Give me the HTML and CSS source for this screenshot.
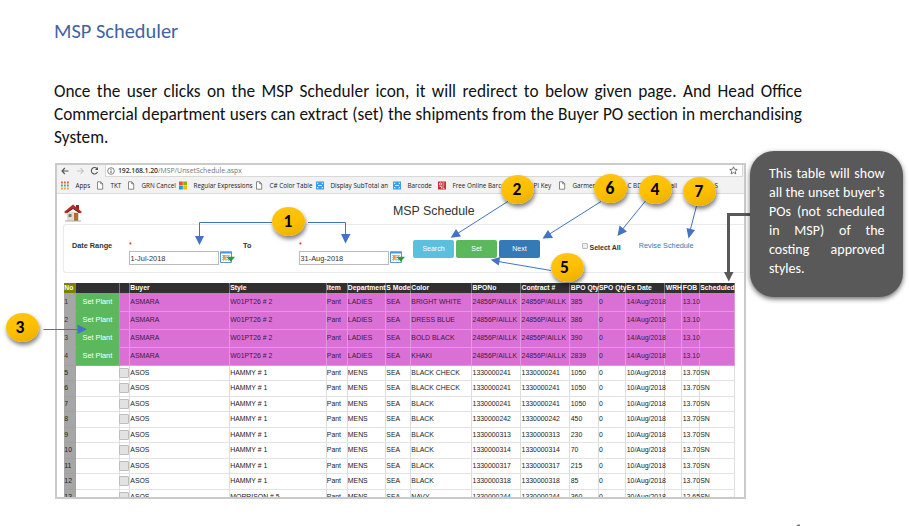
FILE: index.html
```html
<!DOCTYPE html>
<html lang="en">
<head>
<meta charset="utf-8">
<title>MSP Scheduler</title>
<link rel="stylesheet" href="styles.css">
</head>
<body>
<svg class="defs" width="0" height="0" aria-hidden="true">
  <symbol id="doc" viewBox="0 0 8 9"><path d="M1.5 .8h3.2l2 2v5.4H1.500zM4.700 .8v2h2" fill="#fff" stroke="#6b6b6b" stroke-width=".8"/></symbol>
  <symbol id="blue" viewBox="0 0 8 9"><path d="M0 .5h8v8H0z" fill="#3f9be6"/><path d="M1.500 3V2h1M5.500 2h1v1M1.500 6v1h1M5.500 7h1V6M2 4.500h4" fill="none" stroke="#fff" stroke-width=".8"/></symbol>
  <symbol id="cal" viewBox="0 0 15 13"><path d="M.5 1h11v10.500H.5z" fill="#fff" stroke="#5b95d6"/><path d="M0 .5h12v2H0z" fill="#4d93dd"/><path d="M2 4.500h8M2 6.500h8M2 8.500h8M3.500 4v6M6 4v6M8.500 4v6" stroke="#9fb4c6" stroke-width=".8"/><path d="M3 4h2.500v4H3z" fill="#e0a33c"/><path d="M6.500 5.800H15l-4.200 5z" fill="#2e9a3f"/></symbol>
</svg>
<main class="document">
  <h1>MSP Scheduler</h1>
  <div class="intro">
    <p>Once the user clicks on the MSP Scheduler icon, it will redirect to below given page. And Head Office</p>
    <p class="tight">Commercial department users can extract (set) the shipments from the Buyer PO section in merchandising</p>
    <p class="last">System.</p>
  </div>

  <section class="browser">
    <div class="address">
      <svg class="nav" viewBox="0 0 48 12"><g fill="none" stroke="#555" stroke-width="1.100"><path d="M11.500 6H5M7.800 3L5 6l2.800 3"/><path d="M20 6h6M23.500 3.200L26.300 6l-2.800 2.800" stroke="#c4c4c4"/><path d="M40 3.700A3.200 3.200 0 1 0 40.500 7"/></g><path d="M38 5h3V2z" fill="#555"/></svg>
      <div class="url"><svg viewBox="0 0 8 8"><circle cx="4" cy="4" r="3.300" fill="none" stroke="#666" stroke-width=".8"/><path d="M4 3.600v2.400M4 1.900v.9" stroke="#555"/></svg><b>192.168.1.20</b><span>/MSP/UnsetSchedule.aspx</span>
      <svg class="star" viewBox="0 0 10 10"><path d="M5 .9l1.200 2.700 2.900.3-2.200 2 .7 2.900L5 7.300 2.400 8.800l.7-2.900-2.200-2 2.900-.3z" fill="none" stroke="#555" stroke-width=".9"/></svg></div>
    </div>
    <nav class="bookmarks">
      <span class="w35"><svg viewBox="0 0 8 9"><g stroke-width="1.800" stroke-dasharray="1.800 1.200"><path d="M0 1.500h8" stroke="#e25b4f"/><path d="M0 4.500h8" stroke="#58a55c"/><path d="M0 7.500h8" stroke="#e8a33c"/></g></svg>Apps</span>
      <span class="w31"><svg><use href="#doc"/></svg>TKT</span>
      <span class="w52"><svg><use href="#doc"/></svg>GRN Cancel</span>
      <span class="w76"><svg viewBox="0 0 8 9"><path d="M0 .5h3.800v3.800H0z" fill="#f25022"/><path d="M4.200 .5H8v3.800H4.200z" fill="#7fba00"/><path d="M0 4.700h3.800v3.800H0z" fill="#00a4ef"/><path d="M4.200 4.700H8v3.800H4.200z" fill="#ffb900"/></svg>Regular Expressions</span>
      <span class="w61"><svg><use href="#doc"/></svg>C# Color Table</span>
      <span class="w77"><svg><use href="#blue"/></svg>Display SubTotal an</span>
      <span class="w45"><svg><use href="#blue"/></svg>Barcode</span>
      <span class="w77"><svg viewBox="0 0 8 9"><path d="M0 .5h8v8H0z" fill="#c22f34"/><path d="M1.500 2h2v2h-2zM4.500 2h2M4.500 4h2M1.500 5.500h2v2M5 5v2.500h1.500" fill="none" stroke="#fff" stroke-width=".7"/></svg>Free Online Barco</span>
      <span class="w43"><svg></svg>API Key</span>
      <span class="w55"><svg><use href="#doc"/></svg>Garment</span>
      <span class="w43"><svg></svg>C BD</span>
      <span class="w43"><svg></svg>ail</span>
      <span class="end">S</span>
    </nav>
    <div class="page-head">
      <svg class="home" viewBox="0 0 18 18"><path d="M3 8h12v9H3z" fill="#e6dccb"/><path d="M10 9h4v8h-4z" fill="#b26e2d"/><path d="M4.500 10h3v3h-3z" fill="#657f98"/><path d="M12 1h3v5h-3z" fill="#8b281f"/><path d="M0 8L9 .5 18 8l-2 1.500-7-5-7 5z" fill="#b92b24"/><path d="M3 8l6-4 6 4v1l-6-4-6 4z" fill="#5c2020"/><path d="M1 17h16" stroke="#aaa"/></svg>
      <h2>MSP Schedule</h2>
    </div>
    <div class="filters">
      <b class="range">Date Range</b>
      <label class="date"><i>*</i><span>1-Jul-2018</span></label>
      <svg class="cal"><use href="#cal"/></svg>
      <b class="to">To</b>
      <label class="date"><i>*</i><span>31-Aug-2018</span></label>
      <svg class="cal"><use href="#cal"/></svg>
      <div class="buttons"><span class="btn search">Search</span><span class="btn set">Set</span><span class="btn next">Next</span></div>
      <div class="all"><span class="check"></span><b>Select All</b></div>
      <span class="revise">Revise Schedule</span>
    </div>
    <div class="orders" id="orders"></div>
  </section>
</main>

<svg class="arrows" viewBox="0 0 909 526">
  <g fill="none" stroke="#4472c4" stroke-width="1">
    <path d="M272 222.500H199.500V237M308 222.500H345.500V236M508.500 201L456 234.500M551 270.500L498 261.500M601 201.500L548 235M645.500 201L621 231M696.500 206L690 231M43.500 329.500H79"/>
  </g>
  <path fill="#4472c4" d="M195 236h9l-4.500 9zM341 234h9.500L345.500 243.500zM450.700 237.700L456 229l5 7.500zM490.700 259.700l9.500-2.700-1.500 8.500zM542.500 238.500l5.500-8.500 5 8zM617.500 236l2-10.500 7.500 6zM688.500 238.500L686.500 228l8.500 2zM77.500 324.500v9.500l9.500-4.700z"/>
  <path d="M750 214.500H728.500V273" fill="none" stroke="#595959" stroke-width="3"/>
  <path d="M724 272h9.500l-4.700 9.500z" fill="#595959"/>
  <path d="M796 526l2-1.500h2V526z" fill="#777"/>
</svg>
<div class="badge n1">1</div>
<div class="badge n2">2</div>
<div class="badge n3">3</div>
<div class="badge n4">4</div>
<div class="badge n5">5</div>
<div class="badge n6">6</div>
<div class="badge n7">7</div>
<aside class="note">
  <p>This table will show</p><p class="tight">all the unset buyer’s</p><p>POs (not scheduled</p><p>in MSP) of the</p><p>costing approved</p><p class="last">styles.</p>
</aside>
<script src="orders.js"></script>
</body>
</html>
```
FILE: styles.css
```css
* { box-sizing: border-box; }
body { margin: 0; width: 909px; height: 526px; overflow: hidden; background: #fff; position: relative; font-family: "Liberation Sans", sans-serif; }
.defs { position: absolute; }
h1, h2, p { margin: 0; font-weight: normal; }
.document { padding: 19px 0 0 55px; }
h1 { font: 20.400px/24px Carlito, Lato, sans-serif; color: #3f63a3; white-space: nowrap; margin-left: -1px; }
.intro { width: 748px; margin: 37px 0 0 -1px; font: 17.3px/23px Carlito, Lato, sans-serif; color: #111; height: 83px; }
.intro p, .note p { text-align: justify; text-align-last: justify; white-space: nowrap; }
.intro .tight { word-spacing: -1.5px; letter-spacing: -.02px; }
.intro .last, .note .last { text-align-last: left; }

.browser { width: 691px; height: 336px; border: 2px solid #cacaca; overflow: hidden; }
.address { height: 12px; background: #f2f2f2; display: flex; }
.nav { width: 48px; height: 12px; flex: none; }
.url { flex: 1; background: #fff; border: 1px solid #d8d8d8; border-top: 0; margin-right: 1px; display: flex; align-items: center; font: 6.900px/11px "Open Sans", sans-serif; color: #777; }
.url svg { width: 8px; height: 8px; margin: 0 3px 0 1px; }
.url b { font-weight: 600; color: #333; letter-spacing: -.1px; }
.url .star { width: 9px; height: 9px; margin: 0 4px 0 auto; }
.bookmarks { height: 17px; background: #f2f2f2; border-bottom: 1px solid #ddd; display: flex; padding-left: 4px; align-items: center; font: 6.300px/9px "Open Sans", sans-serif; color: #222; white-space: nowrap; }
.bookmarks span { flex: none; display: flex; align-items: center; }
.bookmarks svg { width: 8px; height: 9px; margin-right: 6.500px; flex: none; }
.bookmarks .end { margin-left: 15.500px; }
.w31 { width: 31px; } .w35 { width: 35px; } .w43 { width: 43px; } .w45 { width: 45px; } .w52 { width: 52px; }
.w55 { width: 55px; } .w61 { width: 61px; } .w76 { width: 76px; } .w77 { width: 77px; }

.page-head { height: 30px; display: flex; padding: 10px 0 0 7px; }
.home { width: 18px; height: 18px; }
h2 { font-size: 12.400px; line-height: 14px; color: #333; margin-left: 311px; }
.filters { height: 49px; margin-left: 6px; border: 1px solid #eaeaea; border-right: 0; border-radius: 3px 0 0 3px; display: flex; align-items: flex-start; font-size: 7.300px; line-height: 9px; color: #333; white-space: nowrap; }
.range { width: 57px; margin: 16px 0 0 8px; }
.date { width: 90px; margin-top: 15px; }
.date i { display: block; color: red; font-style: normal; height: 11px; }
.date span { display: block; height: 14px; border: 1px solid #bbb; padding: 2px .5px; font-size: 7.400px; color: #333; }
.cal { width: 15px; height: 13px; margin: 26px 0 0 1px; }
.to { width: 56px; margin: 16px 0 0 8px; }
.buttons { display: flex; gap: 2px; margin: 15px 0 0 8px; }
.btn { width: 41px; height: 18px; border-radius: 2px; color: #fff; text-align: center; line-height: 18px; font-size: 7px; }
.search { background: #5bc0de; } .set { background: #5cb85c; } .next { background: #337ab7; }
.all { display: flex; margin: 17px 0 0 42px; font-size: 7px; line-height: 11px; }
.check { width: 6px; height: 6px; border: 1px solid #bbb; background: #eee; border-radius: 1px; margin: 1px 1.500px 0 0; }
.revise { color: #337ab7; margin: 16px 0 0 18px; }

.orders { margin: 10px 0 0 7px; width: 671px; font-size: 6.900px; color: #222; }
.row { display: grid; grid-template-columns: 12px 43.500px 10.500px 100px 96.500px 21px 38.500px 25px 61.300px 49px 49.200px 28.200px 27.800px 39px 17px 17.500px 35px; height: 15.550px; line-height: 14px; white-space: nowrap; }
.row > span { border-right: 1px solid #ddd; border-bottom: 1px solid #e3e3e3; padding-left: .3px; }
.row > span:first-child { background: #a6a6a6; border-color: #a0a0a0; }
.row.head { height: 9.500px; line-height: 9.500px; background: #303030; color: #fff; font-weight: bold; font-size: 6.800px; }
.row.head > span { border-bottom: 0; border-color: #777; }
.row.head > span:first-child { background: #808000; }
.row.pink { height: 18.250px; line-height: 18px; background: #da70d6; color: #3b1c3a; }
.row.pink > span { border-color: #dd9bdc; }
.row.pink > span:first-child { border-color: #a0a0a0; color: #333; }
.row.pink > .plant { background: #5cb85c; color: #fff; text-align: center; font-size: 7.300px; border-color: #82bb80; border-radius: 2px; }
.box { display: block; width: 10px; height: 10px; margin: 2px 0 0 -.5px; background: #e2e2e2; border: 1px solid #bdbdbd; border-radius: 1px; }

.arrows { position: absolute; left: 0; top: 0; width: 909px; height: 526px; }
.badge { position: absolute; width: 33px; height: 29px; padding-right: 1px; border-radius: 50%; background: linear-gradient(160deg, #ffc61a, #ffc000 50%, #e8ae00); box-shadow: 1px 3px 4px rgba(0,0,0,.5); font: bold 17.500px/29px Carlito, "Open Sans", sans-serif; text-align: center; color: #000; }
.n1 { left: 272px; top: 207px; } .n2 { left: 501px; top: 175px; } .n3 { left: 6px; top: 313px; padding-right: 5px; } .n4 { left: 639px; top: 175px; }
.n5 { left: 551px; top: 253px; padding-right: 6px; } .n6 { left: 594px; top: 174px; } .n7 { left: 683px; top: 177px; }
.note { position: absolute; left: 750px; top: 151px; width: 153px; height: 146px; padding: 13px 18.500px 0 19px; border-radius: 24px; background: #595959; box-shadow: 0 2px 5px rgba(0,0,0,.6); color: #fff; font: 14px/19px Carlito, Lato, sans-serif; }
.note .tight { word-spacing: -1.500px; }
```
FILE: orders.js
```js
const heads = ["No", "", "", "Buyer", "Style", "Item", "Department", "S Mode", "Color", "BPONo", "Contract #", "BPO Qty", "SPO Qty", "Ex Date", "WRH", "FOB", "Scheduled"];
const unset = [["BRIGHT WHITE", 385], ["DRESS BLUE", 386], ["BOLD BLACK", 390], ["KHAKI", 2839]];
const planned = [
  ["BLACK CHECK", "1330000241", 1050], ["BLACK CHECK", "1330000241", 1050], ["BLACK", "1330000241", 1050],
  ["BLACK", "1330000242", 450], ["BLACK", "1330000313", 230], ["BLACK", "1330000314", 70],
  ["BLACK", "1330000317", 215], ["BLACK", "1330000318", 85],
  ["NAVY", "1330000244", 360, "MORRISON # 5", "30/Aug/2018", "12.65"]
];
const table = document.getElementById("orders");
function addRow(kind, cells) {
  const row = document.createElement("div");
  row.className = "row " + kind;
  cells.forEach((value, i) => {
    const cell = document.createElement("span");
    cell.textContent = value;
    if (i === 1) cell.className = "plant";
    if (i === 2 && kind === "plain") cell.innerHTML = '<span class="box"></span>';
    row.append(cell);
  });
  table.append(row);
}
addRow("head", heads);
unset.forEach(([color, qty], i) => addRow("pink", [i + 1, "Set Plant", "", "ASMARA", "W01PT26 # 2", "Pant", "LADIES", "SEA", color, "24856P/AILLK", "24856P/AILLK", qty, 0, "14/Aug/2018", "", "13.10", ""]));
planned.forEach(([color, po, qty, style = "HAMMY # 1", date = "10/Aug/2018", fob = "13.70"], i) => addRow("plain", [i + 5, "", "", "ASOS", style, "Pant", "MENS", "SEA", color, po, po, qty, 0, date, "", fob, "SN"]));
```
